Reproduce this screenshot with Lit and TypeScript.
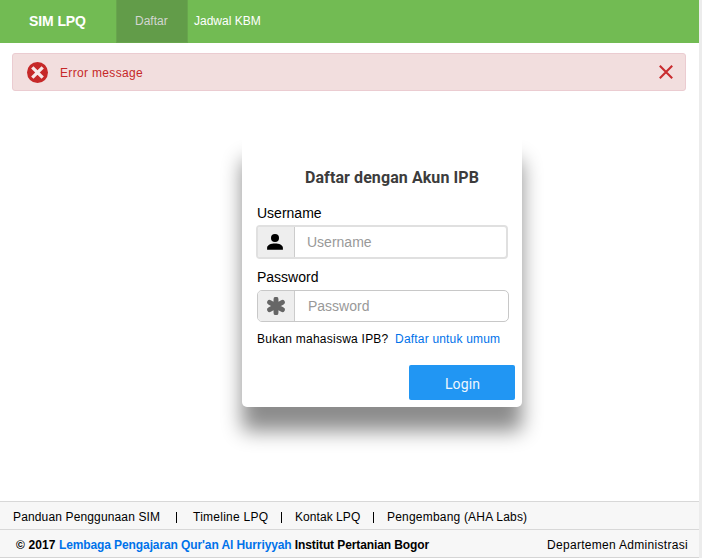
import { LitElement, html, css } from "lit";
import { customElement } from "lit/decorators.js";

@customElement("app-root")
class AppRoot extends LitElement {
  static styles = css`
    * { box-sizing: border-box; }
    :host {
      display: block;
      width: 702px;
      height: 558px;
      overflow: hidden;
      background: #ececec;
      font: 12px/16px "Liberation Sans", Arial, sans-serif;
      color: #000;
      white-space: nowrap;
    }
    .page {
      width: 699px;
      height: 558px;
      background: #fff;
      display: flex;
      flex-direction: column;
      border-bottom: 1px solid #d5d5d5;
    }
    .nav {
      height: 43px;
      background: #72bb53;
      display: flex;
      color: #fff;
      line-height: 42px;
    }
    .brand { width: 116px; padding-left: 29px; font-size: 14px; font-weight: bold; letter-spacing: -0.1px; }
    .tab {
      width: 72px;
      height: 43px;
      padding-left: 18px;
      background: #629c49;
      border: 1px solid #68a64d;
      border-top: 0;
      color: #d3d6d1;
    }
    .link { padding-left: 6px; }
    .alert {
      margin: 10px 13px 0 12px;
      height: 38px;
      padding: 0 12px 0 14px;
      display: flex;
      align-items: center;
      background: #f2dede;
      border: 1px solid #ebccd1;
      border-radius: 3px;
      color: #c62828;
    }
    .alert span { flex: 1; padding-left: 12px; letter-spacing: 0.33px; padding-top: 1px; }
    svg { display: block; }
    .main { flex: 1; display: flex; padding: 45px 0 0 242px; }
    .card {
      width: 280px;
      height: 271px;
      padding: 33px 7px 7px 15px;
      display: flex;
      flex-direction: column;
      background: #fff;
      border-radius: 5px;
      box-shadow: 0 24px 20px #8c8c8c;
    }
    .title {
      margin: 0 0 17px 48px;
      font: bold 16px/18px Roboto, sans-serif;
      color: #3c3c3c;
      letter-spacing: 0.08px;
    }
    .label { font-size: 14px; line-height: 16px; margin-top: 1px; }
    .field {
      width: 252px;
      height: 34px;
      margin: 4px 0 9px -1px;
      display: flex;
      background: #fff;
      border: 2px solid #e0e0e0;
      border-radius: 4px;
      overflow: hidden;
    }
    .field.thin { height: 32px; margin: 5px 0 9px 0; border: 1px solid #c8c8c8; border-radius: 5px; }
    .addon {
      width: 37px;
      display: flex;
      align-items: center;
      justify-content: center;
      background: #eee;
      border-right: 1px solid #ccc;
    }
    .user { padding-right: 2px; }
    input {
      flex: 1;
      min-width: 0;
      border: 0;
      outline: 0;
      padding: 0 0 0 12px;
      background: none;
      font: 14px "Liberation Sans", Arial, sans-serif;
    }
    .thin input { padding-left: 13px; }
    input::placeholder { color: #999; opacity: 1; }
    a { color: #0072ea; text-decoration: none; }
    .signup { letter-spacing: 0.24px; }
    .signup a { margin-left: 3px; letter-spacing: 0.18px; }
    button {
      margin: auto 0 0 auto;
      width: 106px;
      height: 35px;
      padding: 2px 0 0 1px;
      border: 0;
      border-radius: 2px;
      background: #2196f3;
      color: #eef7fe;
      font: 14px Roboto, sans-serif;
      letter-spacing: 0.1px;
    }
    .row {
      height: 28px;
      background: #f7f7f7;
      border-top: 1px solid #d8d8d8;
      display: flex;
      align-items: center;
      padding: 3px 11px 0 13px;
    }
    .sep { width: 1px; height: 11px; background: #000; }
    .s1 { margin: 0 16px 0 16px; }
    .s2 { margin: 0 13px 0 13px; }
    .n1 { width: 147px; letter-spacing: 0.14px; }
    .n2 { width: 75px; letter-spacing: 0.25px; }
    .n3 { width: 65px; letter-spacing: 0.06px; }
    .n4 { letter-spacing: 0.2px; }
    .copy { padding: 3px 11px 0 16px; justify-content: space-between; }
    .copy b { letter-spacing: -0.1px; }
    .year { letter-spacing: 0.1px; }
    .dept { letter-spacing: 0.3px; }
  `;

  render() {
    return html`
      <div class="page">
        <nav class="nav">
          <div class="brand">SIM LPQ</div>
          <div class="tab">Daftar</div>
          <div class="link">Jadwal KBM</div>
        </nav>
        <div class="alert">
          <svg width="21" height="21" viewBox="0 0 21 21">
            <circle cx="10.5" cy="10.5" r="10.5" fill="#c62828" />
            <path d="M5.300 5.300l10.400 10.400M15.700 5.300l-10.400 10.400" stroke="#f7e8e8" stroke-width="3.300" />
          </svg>
          <span>Error message</span>
          <svg width="14" height="14" viewBox="0 0 14 14">
            <path d="M.8 .8l12.4 12.4M13.2 .8L.8 13.2" stroke="#c92c2f" stroke-width="2.100" />
          </svg>
        </div>
        <main class="main">
          <form class="card">
            <div class="title">Daftar dengan Akun IPB</div>
            <label class="label">Username</label>
            <div class="field">
              <div class="addon user">
                <svg width="16" height="16" viewBox="0 0 16 16">
                  <circle cx="8" cy="4" r="4" />
                  <path d="M8 9.600c-4 0-7.900 1.500-7.900 4.200v1.900h15.800v-1.900c0-2.700-3.900-4.200-7.900-4.200z" />
                </svg>
              </div>
              <input placeholder="Username" />
            </div>
            <label class="label">Password</label>
            <div class="field thin">
              <div class="addon">
                <svg width="18" height="18" viewBox="0 0 18 18">
                  <path d="M9 2.200v13.600M2.600 5.300l12.800 7.400M2.600 12.700l12.800-7.400" stroke="#666" stroke-width="4.900" stroke-linecap="round" />
                </svg>
              </div>
              <input type="password" placeholder="Password" />
            </div>
            <div class="signup">Bukan mahasiswa IPB? <a>Daftar untuk umum</a></div>
            <button type="button">Login</button>
          </form>
        </main>
        <div class="row">
          <span class="n1">Panduan Penggunaan SIM</span><i class="sep s1"></i>
          <span class="n2">Timeline LPQ</span><i class="sep s2"></i>
          <span class="n3">Kontak LPQ</span><i class="sep s2"></i>
          <span class="n4">Pengembang (AHA Labs)</span>
        </div>
        <div class="row copy">
          <b><span class="year">© 2017 </span><a>Lembaga Pengajaran Qur'an Al Hurriyyah</a> Institut Pertanian Bogor</b>
          <span class="dept">Departemen Administrasi</span>
        </div>
      </div>
    `;
  }
}
